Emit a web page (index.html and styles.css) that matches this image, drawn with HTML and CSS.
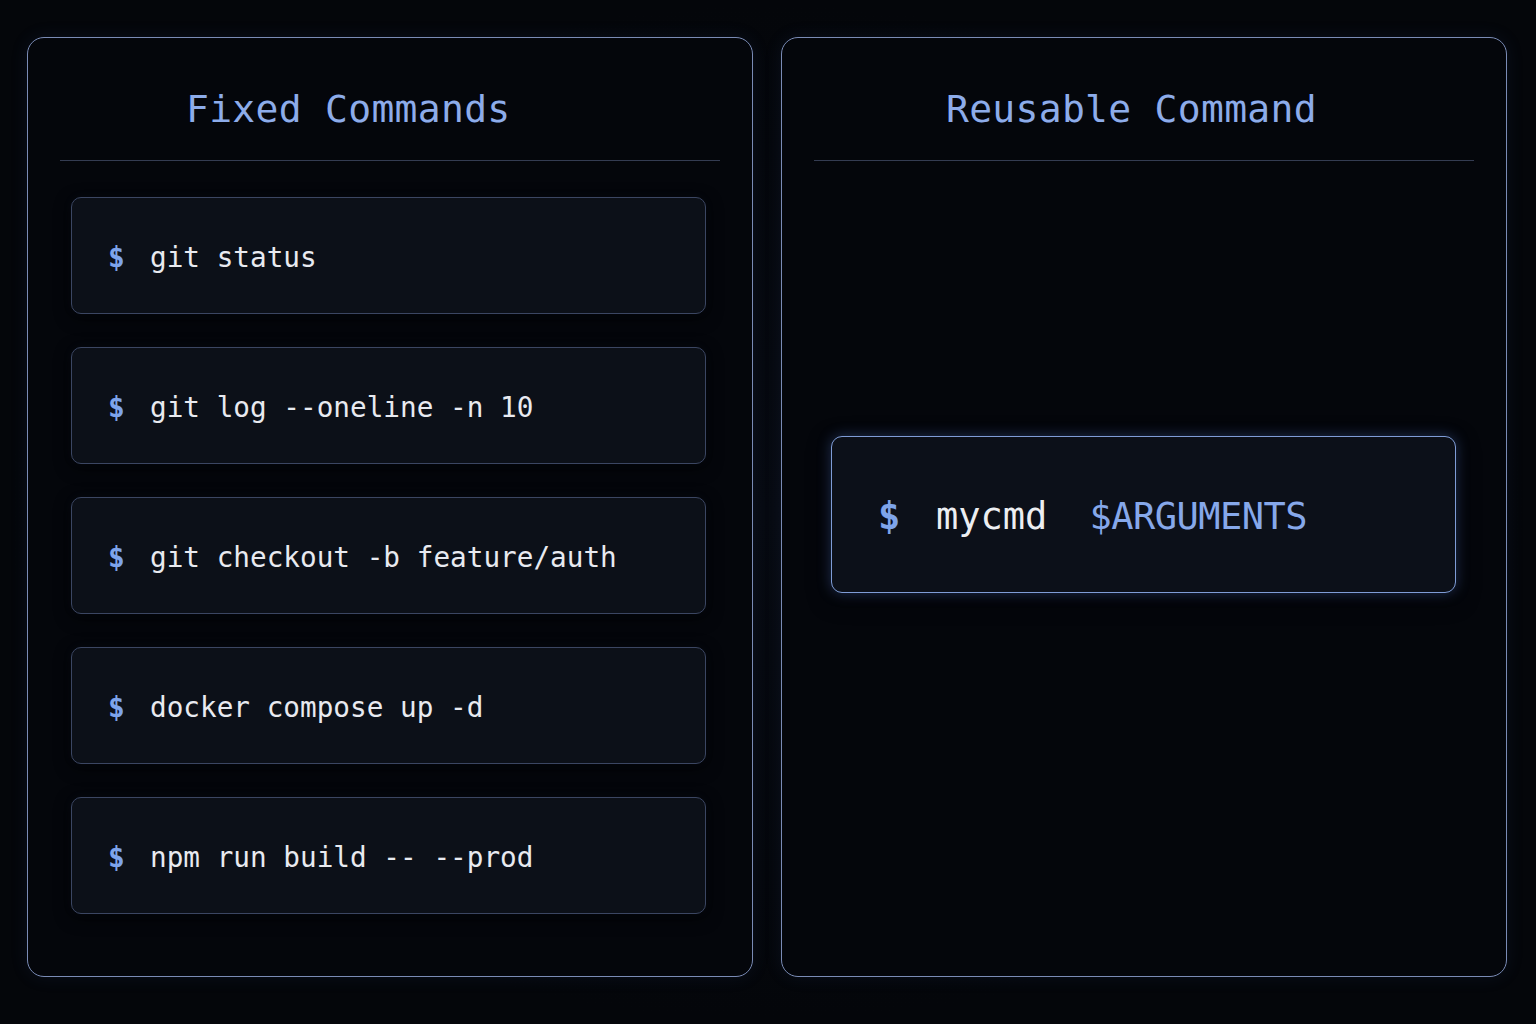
FILE: index.html
```html
<!DOCTYPE html>
<html lang="en">
<head>
<meta charset="utf-8">
<title>Fixed vs Reusable Commands</title>
<link rel="stylesheet" href="styles.css">
</head>
<body>
<main class="page">
  <section class="panel">
    <header class="panel-head">
      <h2 class="panel-title">Fixed Commands</h2>
    </header>
    <div class="divider"></div>
    <ul class="cmd-list">
      <li class="cmd"><span class="prompt">$</span><span class="cmd-text">git status</span></li>
      <li class="cmd"><span class="prompt">$</span><span class="cmd-text">git log --oneline -n 10</span></li>
      <li class="cmd"><span class="prompt">$</span><span class="cmd-text">git checkout -b feature/auth</span></li>
      <li class="cmd"><span class="prompt">$</span><span class="cmd-text">docker compose up -d</span></li>
      <li class="cmd"><span class="prompt">$</span><span class="cmd-text">npm run build -- --prod</span></li>
    </ul>
  </section>
  <section class="panel">
    <header class="panel-head">
      <h2 class="panel-title panel-title-right">Reusable Command</h2>
    </header>
    <div class="divider"></div>
    <div class="reuse-body">
      <div class="reuse-card">
        <span class="prompt prompt-lg">$</span>
        <span class="reuse-name">mycmd</span>
        <span class="reuse-arg">$ARGUMENTS</span>
      </div>
    </div>
  </section>
</main>
</body>
</html>
```

FILE: styles.css
```css
html, body {
  margin: 0;
  padding: 0;
  background: #04060a;
}

body {
  font-family: "DejaVu Sans Mono", "Liberation Mono", monospace;
  color: #e4e7ee;
  width: 1536px;
  height: 1024px;
  overflow: hidden;
  background: radial-gradient(ellipse at 50% 50%, #070a11 0%, #04060a 70%);
}

.page {
  display: flex;
  gap: 28px;
  padding: 37px 0 0 27px;
}

.panel {
  box-sizing: border-box;
  width: 726px;
  height: 940px;
  border: 1.5px solid #7a8bb5;
  border-radius: 17px;
  padding: 0 32px;
  background: #04060b;
  box-shadow: 0 0 18px rgba(60, 90, 160, 0.12);
  display: flex;
  flex-direction: column;
}

.panel-head {
  height: 122px;
  box-sizing: border-box;
  padding-top: 47px;
}

.panel-title {
  margin: 0;
  padding-left: 126px;
  font-size: 38px;
  line-height: 48px;
  font-weight: normal;
  color: #8dacea;
  letter-spacing: 0.3px;
}

.panel-title-right {
  padding-left: 132px;
}

.divider {
  height: 1px;
  background: #343c52;
}

.cmd-list {
  list-style: none;
  margin: 36px 14px 0 11px;
  padding: 0;
  display: flex;
  flex-direction: column;
  gap: 33px;
}

.cmd {
  box-sizing: border-box;
  height: 117px;
  display: flex;
  align-items: center;
  padding: 4px 0 0 36px;
  background: #0c1018;
  border: 1.5px solid #3b4662;
  border-radius: 10px;
  box-shadow: 0 4px 16px rgba(0, 0, 0, 0.6), 0 0 10px rgba(60, 90, 150, 0.08);
  font-size: 27.7px;
  color: #e8eaf0;
}

.prompt {
  display: inline-block;
  color: #7ea4ea;
  font-weight: bold;
  width: 17px;
  margin-right: 25px;
}

.cmd-text {
  white-space: pre;
}

.reuse-body {
  padding: 275px 18px 0 17px;
}

.reuse-card {
  box-sizing: border-box;
  height: 157px;
  display: flex;
  align-items: center;
  padding: 4px 0 0 46px;
  background: #0c1019;
  border: 1.5px solid #7f9cd6;
  border-radius: 11px;
  box-shadow: 0 0 14px rgba(90, 130, 220, 0.35), 0 6px 22px rgba(0, 0, 0, 0.6);
  font-size: 37px;
}

.prompt-lg {
  width: 23px;
  margin-right: 35px;
  font-weight: bold;
}

.reuse-name {
  color: #eceef2;
  margin-right: 42px;
}

.reuse-arg {
  color: #86a8ea;
  letter-spacing: -0.5px;
}
```
